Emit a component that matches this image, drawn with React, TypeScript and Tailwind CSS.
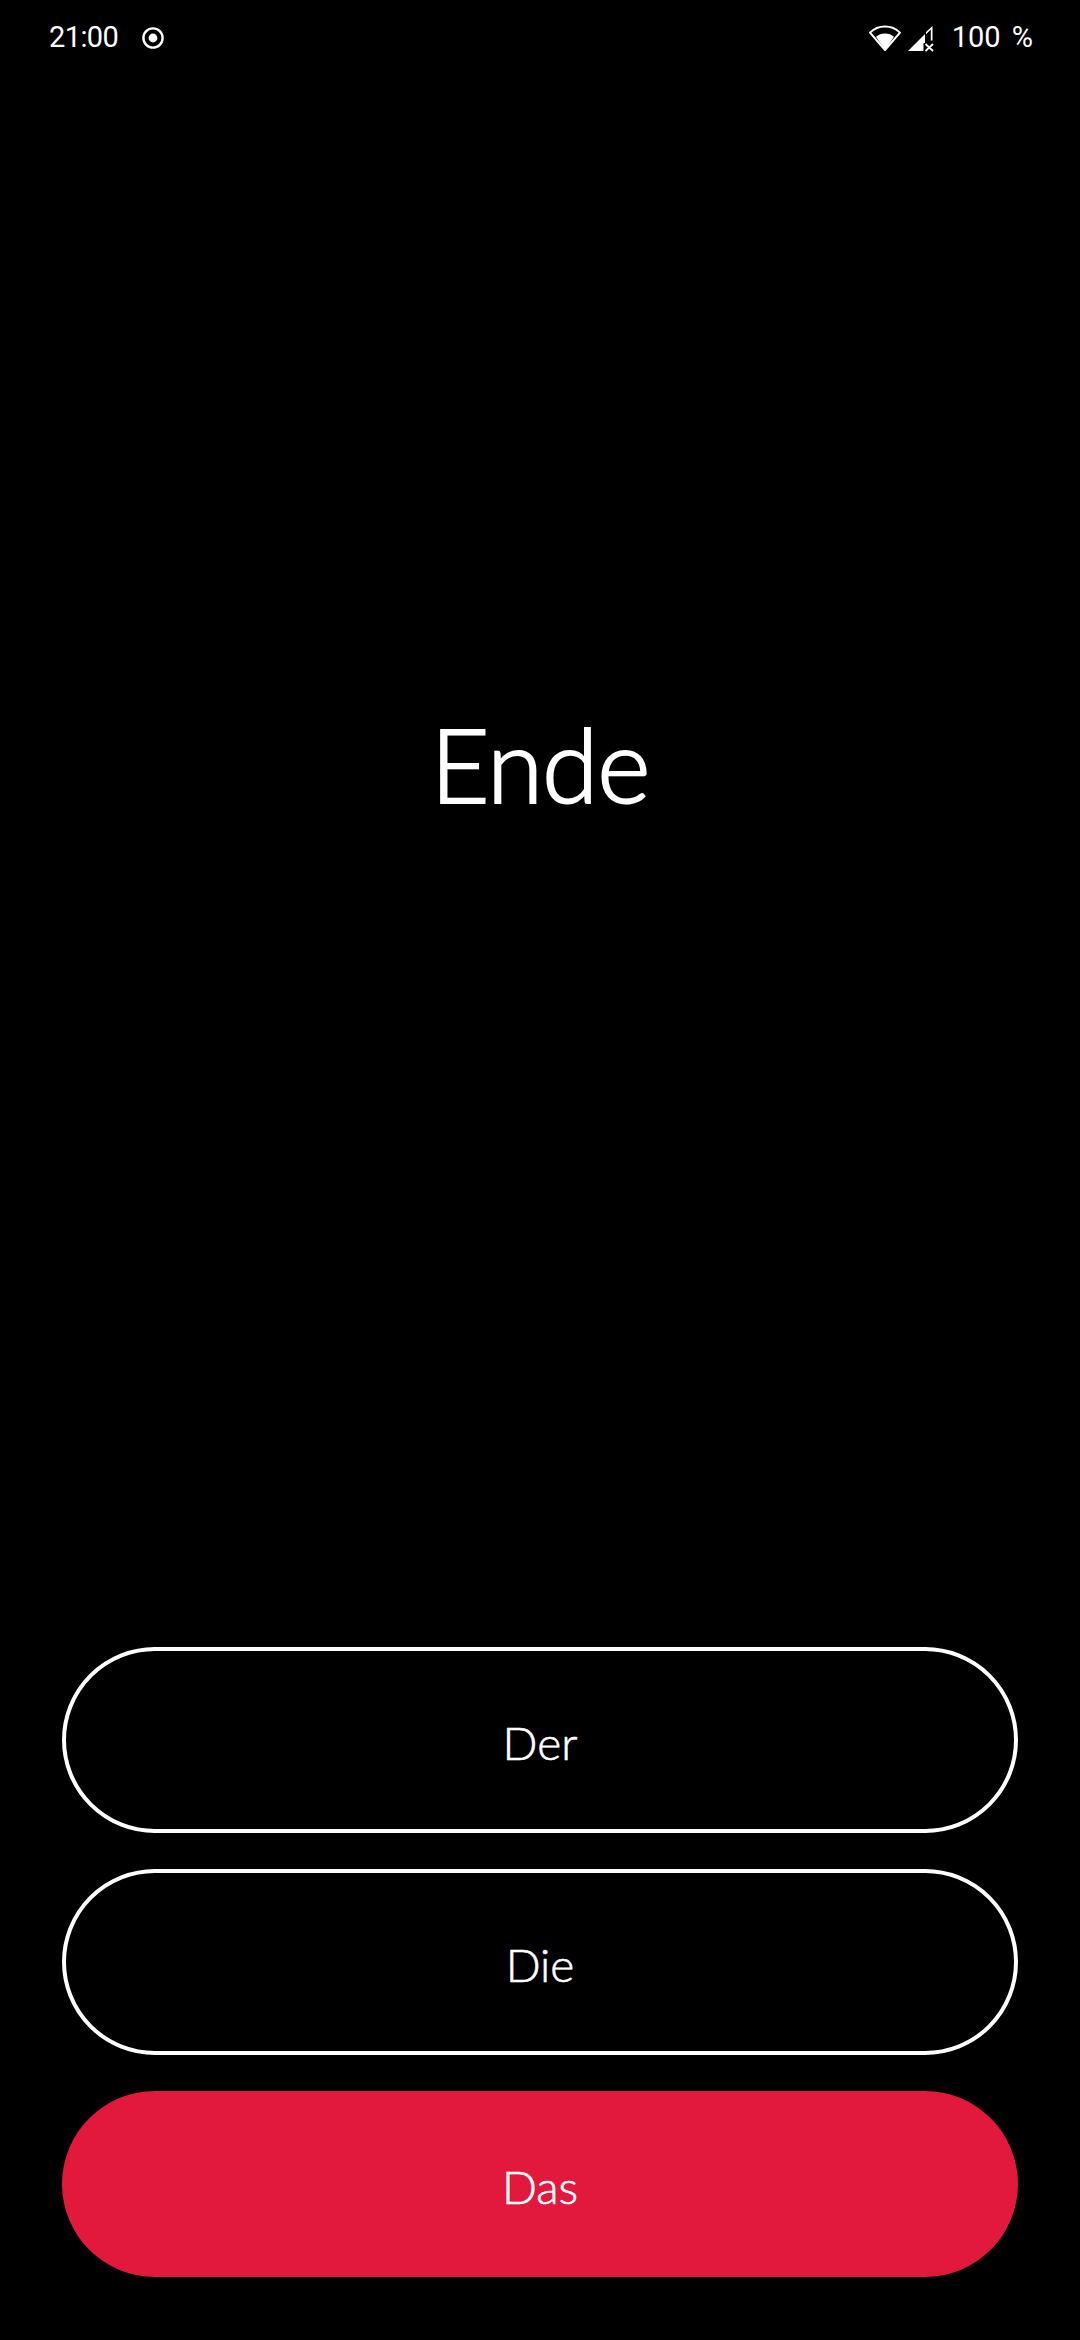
const fontClass = "font-['Lato','Liberation_Sans',sans-serif]";

function RecordIcon() {
  return (
    <svg width="24" height="24" viewBox="0 0 24 24" fill="none">
      <circle cx="12" cy="12" r="9.6" stroke="white" strokeWidth="2.4" />
      <circle cx="12" cy="12" r="4.4" fill="white" />
    </svg>
  );
}

function WifiIcon() {
  return (
    <svg width="34" height="28" viewBox="0 0 34 28" fill="none">
      <path d="M2 8.6C6 4.6 11 2.4 17 2.4s11 2.2 15 6.2L17 26Z" stroke="white" strokeWidth="2" strokeLinejoin="round" />
      <path d="M8 12.8C10.4 10.6 13.5 9.4 17 9.4s6.6 1.2 9 3.4L17 26Z" fill="white" />
    </svg>
  );
}

function SignalIcon() {
  return (
    <svg width="28" height="28" viewBox="0 0 28 28" fill="none">
      <path d="M1 27 L18 10 V19 H16.5 V27 Z" fill="white" />
      <path d="M25.5 2 V16.5 H23.8 V5.5 L19 10.2 V8 Z" fill="white" />
      <path d="M18.5 20 L26 27 M26 20 L18.5 27" stroke="white" strokeWidth="1.8" />
    </svg>
  );
}

function AnswerButton({ label, selected = false }: { label: string; selected?: boolean }) {
  return (
    <button
      className={
        selected
          ? "flex h-[186px] w-full items-center justify-center rounded-full bg-[#e2183d] pt-[4px] text-[46px] font-light text-white [-webkit-text-stroke:0.6px_white]"
          : "flex h-[186px] w-full items-center justify-center rounded-full border-4 border-white bg-black pt-[4px] text-[46px] font-light text-white [-webkit-text-stroke:0.6px_white]"
      }
    >
      {label}
    </button>
  );
}

export default function App() {
  return (
    <div className={`flex h-[2340px] w-[1080px] flex-col bg-black text-white ${fontClass}`}>
      <div className="flex h-[76px] shrink-0 items-center justify-between pl-[49px] pr-[47px] font-['Roboto',sans-serif] text-[29px] font-normal">
        <div className="flex items-center gap-[23px]">
          <span className="tracking-[-0.6px]">21:00</span>
          <RecordIcon />
        </div>
        <div className="flex items-center gap-[5px]">
          <WifiIcon />
          <SignalIcon />
          <span className="ml-[12px] [word-spacing:4px]">100 %</span>
        </div>
      </div>
      <div className="flex flex-1 items-center justify-center pb-[196px]">
        <h1 className="text-[102px] font-light leading-none tracking-[-1px] [-webkit-text-stroke:2px_white]">Ende</h1>
      </div>
      <div className="flex flex-col gap-[36px] px-[62px] pb-[63px]">
        <AnswerButton label="Der" />
        <AnswerButton label="Die" />
        <AnswerButton label="Das" selected />
      </div>
    </div>
  );
}
